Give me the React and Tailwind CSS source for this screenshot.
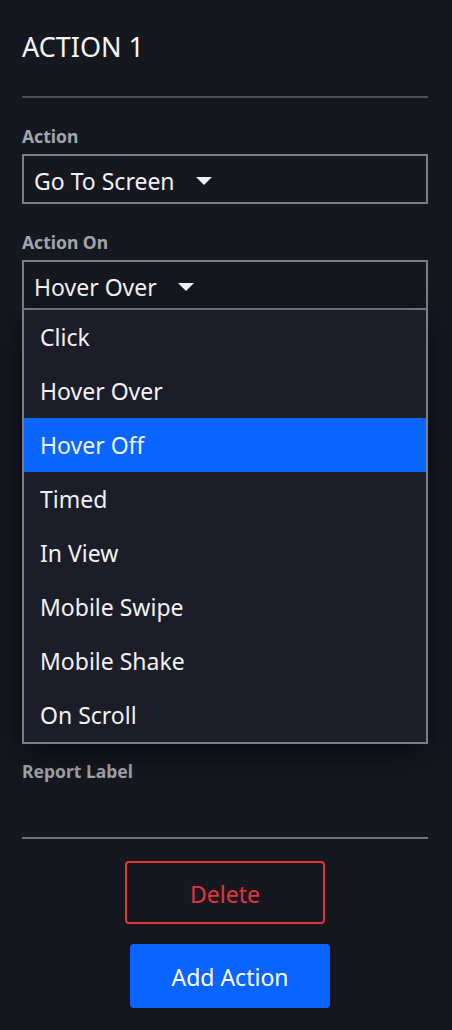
import { useState } from "react";

const triggers = [
  "Click",
  "Hover Over",
  "Hover Off",
  "Timed",
  "In View",
  "Mobile Swipe",
  "Mobile Shake",
  "On Scroll",
];

function Caret() {
  return (
    <svg width="16" height="8" viewBox="0 0 16 8" className="ml-[21px] shrink-0">
      <path d="M0 0h16L8 8z" fill="#f2f2f4" />
    </svg>
  );
}

function Label({ children, className = "mt-[28px]" }) {
  return (
    <div className={`${className} text-[17.5px] leading-[20px] font-bold text-[#a3a4aa]`}>
      {children}
    </div>
  );
}

function SelectBox({ value }) {
  return (
    <div className="mt-[8px] flex h-[50px] items-center border-2 border-[#7b7d89] px-[10px] pt-[3px] text-[23px] leading-[30px] text-[#f2f2f4]">
      <span>{value}</span>
      <Caret />
    </div>
  );
}

export default function App() {
  const [active, setActive] = useState("Hover Off");

  return (
    <div
      className="min-h-[1030px] bg-[#161820] pl-[22px] pr-[24px] pt-[31px] pb-[22px]"
      style={{ fontFamily: '"Noto Sans", "Open Sans", sans-serif' }}
    >
      <h1 className="text-[27px] leading-[32px] font-normal text-[#f4f4f6]">ACTION 1</h1>
      <div className="mt-[33px] h-[2px] bg-[#4b4d59]" />

      <Label>Action</Label>
      <SelectBox value="Go To Screen" />

      <Label>Action On</Label>
      <SelectBox value="Hover Over" />
      <ul className="relative z-10 border-2 border-t-0 border-[#7b7d89] bg-[#1b1d29] shadow-[0_10px_28px_rgba(0,0,0,0.55)]">
        {triggers.map((t) => (
          <li
            key={t}
            onClick={() => setActive(t)}
            className={`flex h-[54px] cursor-pointer items-center pl-[16px] text-[23px] leading-[30px] text-[#f2f2f4] ${
              t === active ? "bg-[#0a66ff]" : ""
            }`}
          >
            {t}
          </li>
        ))}
      </ul>

      <Label className="mt-[17px]">Report Label</Label>
      <div className="h-[58px] border-b-2 border-[#6f717d]" />

      <div className="mt-[22px] flex flex-col items-center">
        <button className="h-[63px] w-[200px] rounded-[4px] border-2 border-[#e2353c] pt-[3px] text-[23px] leading-[30px] text-[#e2353c]">
          Delete
        </button>
        <button className="ml-[10px] mt-[20px] h-[64px] w-[200px] rounded-[4px] bg-[#0a64ff] pt-[2px] text-[23px] leading-[30px] text-white">
          Add Action
        </button>
      </div>
    </div>
  );
}
